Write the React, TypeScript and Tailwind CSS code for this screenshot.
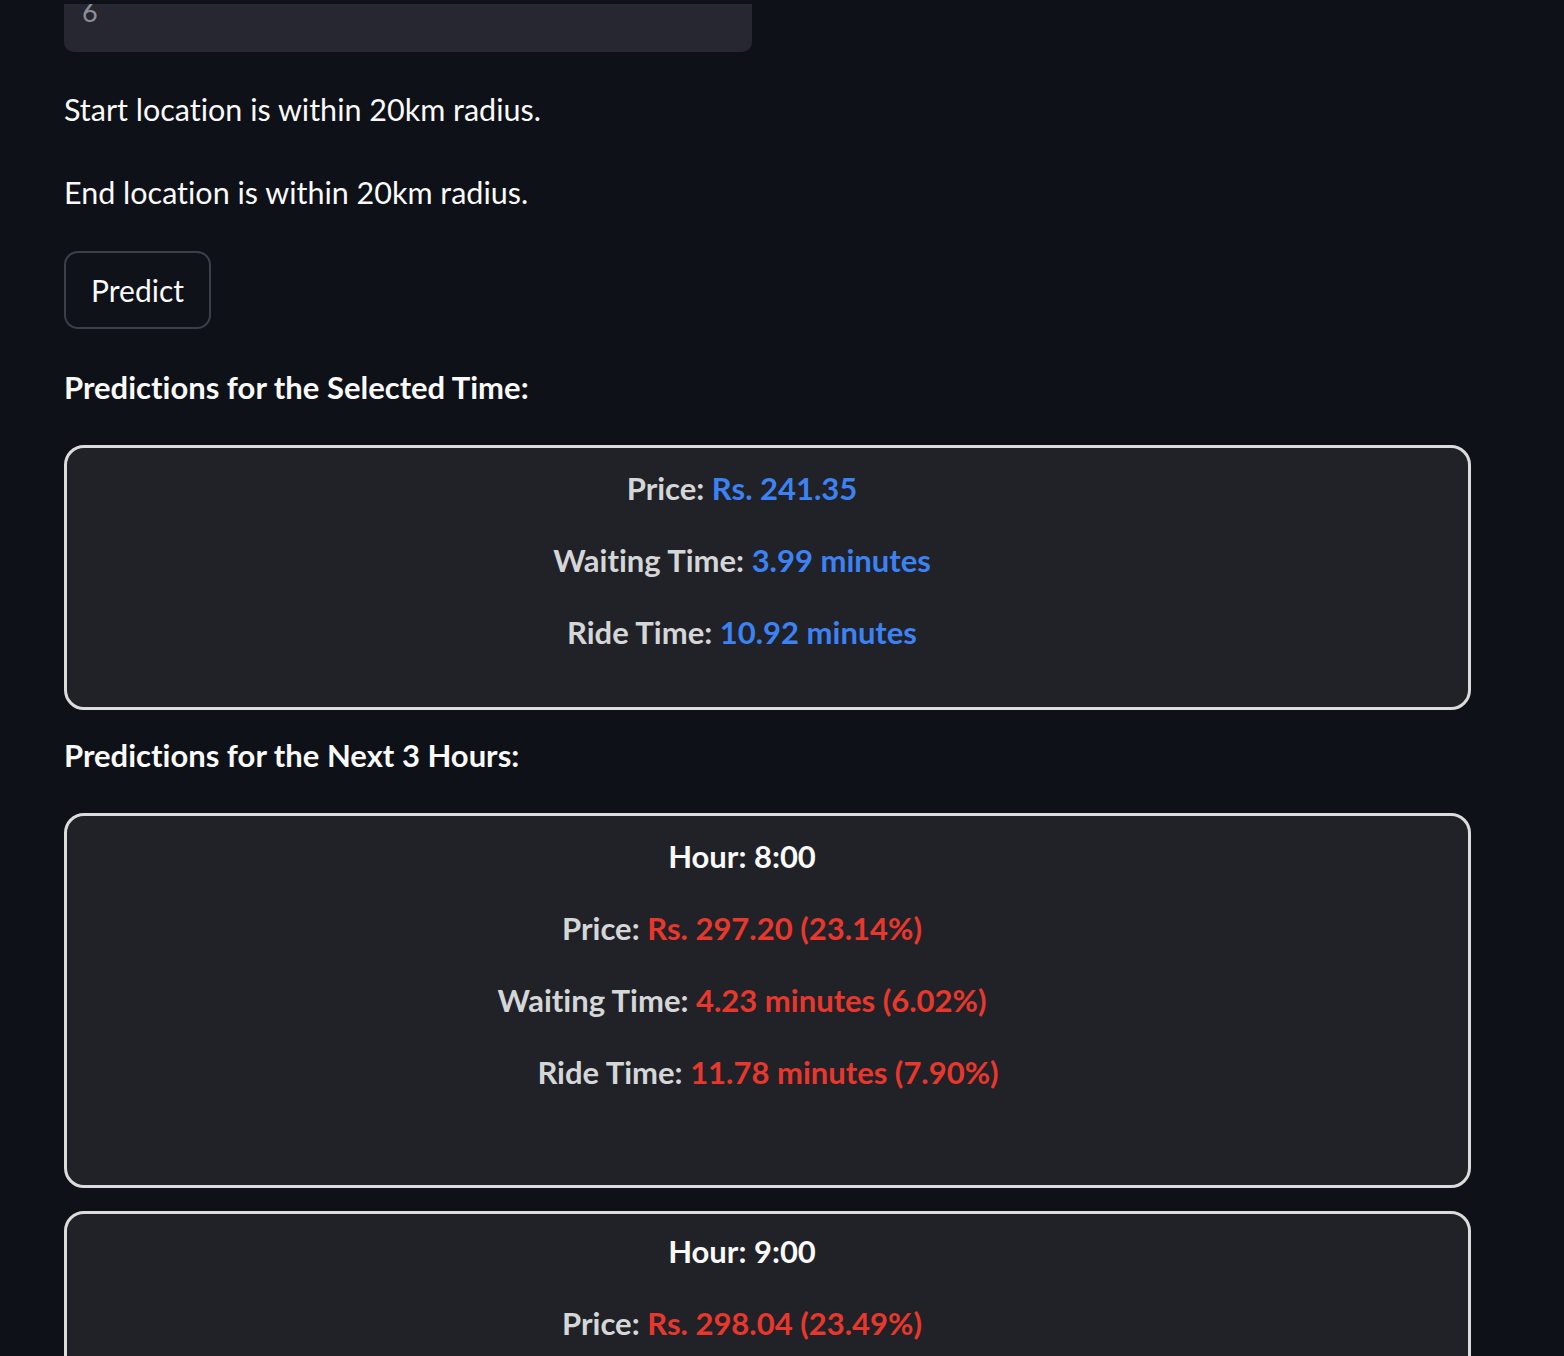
import React from "react";

type Row = { label: string; value: string; shift?: boolean };

const selected: Row[] = [
  { label: "Price:", value: "Rs. 241.35" },
  { label: "Waiting Time:", value: "3.99 minutes" },
  { label: "Ride Time:", value: "10.92 minutes" },
];

const hours = [
  {
    hour: "8:00",
    rows: [
      { label: "Price:", value: "Rs. 297.20 (23.14%)" },
      { label: "Waiting Time:", value: "4.23 minutes (6.02%)" },
      { label: "Ride Time:", value: "11.78 minutes (7.90%)", shift: true },
    ] as Row[],
  },
  {
    hour: "9:00",
    rows: [
      { label: "Price:", value: "Rs. 298.04 (23.49%)" },
      { label: "Waiting Time:", value: "4.25 minutes (6.51%)" },
      { label: "Ride Time:", value: "11.80 minutes (8.06%)", shift: true },
    ] as Row[],
  },
];

function Line({ row, color }: { row: Row; color: string }) {
  return (
    <p className={`leading-[44px] text-[31px] font-bold text-center ${row.shift ? "pl-[52px]" : ""}`}>
      <span className="text-[#d5d6d8]">{row.label} </span>
      <span className={color}>{row.value}</span>
    </p>
  );
}

export default function App() {
  return (
    <div
      className="min-h-screen h-[1356px] overflow-hidden bg-[#0e1117] text-[#fafafa] text-[30.5px] [font-variant-ligatures:none]"
      style={{ fontFamily: "Lato, 'Open Sans', sans-serif" }}
    >
      <div className="pt-[4px] pl-[64px] pr-[92px]">
        {/* number input, scrolled under the header */}
        <div className="w-[688px] h-[48px] rounded-b-[10px] bg-[#262730] overflow-hidden">
          <div className="pl-[18px] -mt-[14px] leading-[44px] text-[#8c8f99] text-[27px]">6</div>
        </div>

        <p className="mt-[35px] leading-[44px]">Start location is within 20km radius.</p>
        <p className="mt-[39px] leading-[44px]">End location is within 20km radius.</p>

        <button className="mt-[37px] block w-[147px] h-[78px] rounded-[14px] border-2 border-[#3c3f49] bg-[#0f1218] text-[#fafafa] text-[30px]">
          Predict
        </button>

        <h3 className="mt-[36px] leading-[44px] text-[31px] font-bold">Predictions for the Selected Time:</h3>

        <div className="mt-[36px] w-[1407px] rounded-[20px] border-[3px] border-[#dcdcdd] bg-[#202227] pt-[18px] pb-[53px] pr-[51px] flex flex-col gap-[28px]">
          {selected.map((r) => (
            <Line key={r.label} row={r} color="text-[#3d82f4]" />
          ))}
        </div>

        <h3 className="mt-[23px] leading-[44px] text-[31px] font-bold">Predictions for the Next 3 Hours:</h3>

        <div className="mt-[36px] flex flex-col gap-[23px]">
          {hours.map((h, i) => (
            <div
              key={h.hour}
              className={`w-[1407px] rounded-[20px] border-[3px] border-[#dcdcdd] bg-[#202227] pb-[91px] pr-[51px] flex flex-col gap-[28px] ${
                i === 0 ? "pt-[18px]" : "pt-[15px]"
              }`}
            >
              <p className="leading-[44px] text-[31px] font-bold text-center text-[#fafafa]">Hour: {h.hour}</p>
              {h.rows.map((r) => (
                <Line key={r.label} row={r} color="text-[#e8372c]" />
              ))}
            </div>
          ))}
        </div>
      </div>
    </div>
  );
}
